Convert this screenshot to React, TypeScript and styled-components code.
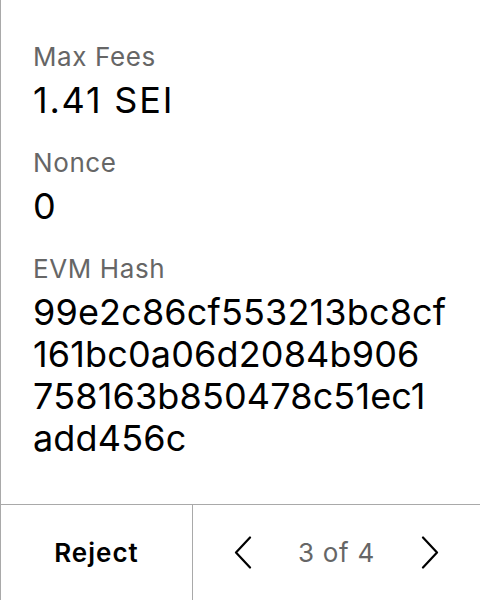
import React from "react";
import styled, { createGlobalStyle } from "styled-components";

const Global = createGlobalStyle`
  html, body { margin: 0; padding: 0; background: #fff; }
  body { font-family: Inter, "Noto Sans", sans-serif; -webkit-font-smoothing: antialiased; }
`;

const Frame = styled.div`
  width: 480px;
  height: 600px;
  box-sizing: border-box;
  border-left: 1px solid #a9a9a9;
  display: flex;
  flex-direction: column;
  background: #fff;
`;

const Content = styled.div`
  flex: 1;
  padding: 41px 32px 0 32px;
  display: flex;
  flex-direction: column;
  gap: 26px;
`;

const Field = styled.div`
  display: flex;
  flex-direction: column;
  gap: 6px;
`;

const Label = styled.div`
  font-size: 26px;
  line-height: 32px;
  letter-spacing: 0.6px;
  color: #666;
`;

const Value = styled.div<{ $tracking?: number }>`
  font-size: 36px;
  line-height: 42px;
  color: #000;
  letter-spacing: ${(p) => p.$tracking ?? 0.15}px;
`;

const HashLine = styled.span`
  display: block;
`;

const Footer = styled.div`
  height: 96px;
  box-sizing: border-box;
  border-top: 1px solid #a9a9a9;
  display: grid;
  grid-template-columns: 192px 1fr;
  flex-shrink: 0;
`;

const RejectButton = styled.button`
  box-sizing: border-box;
  border: none;
  border-right: 1px solid #a9a9a9;
  background: transparent;
  font-family: inherit;
  font-size: 26px;
  font-weight: 600;
  letter-spacing: 1px;
  color: #000;
  padding: 0;
`;

const Pager = styled.div`
  display: flex;
  align-items: center;
  justify-content: space-between;
  padding: 0 41px;
`;

const Arrow = styled.button`
  border: none;
  background: transparent;
  padding: 0;
  display: flex;
`;

const PageText = styled.span`
  font-size: 26px;
  letter-spacing: 0.7px;
  color: #666;
`;

const Chevron = ({ dir }: { dir: "left" | "right" }) => (
  <svg width="18" height="34" viewBox="0 0 18 34" fill="none">
    <path
      d={dir === "left" ? "M16 1.5 L2 16.5 L16 31.5" : "M2 1.5 L16 16.5 L2 31.5"}
      stroke="#000"
      strokeWidth="2.2"
      strokeLinecap="round"
      strokeLinejoin="round"
    />
  </svg>
);

const hashLines = [
  "99e2c86cf553213bc8cf",
  "161bc0a06d2084b906",
  "758163b850478c51ec1",
  "add456c",
];

export default function App() {
  return (
    <>
      <Global />
      <Frame>
        <Content>
          <Field>
            <Label>Max Fees</Label>
            <Value $tracking={1.8}>1.41 SEI</Value>
          </Field>
          <Field>
            <Label>Nonce</Label>
            <Value>0</Value>
          </Field>
          <Field>
            <Label>EVM Hash</Label>
            <Value>
              {hashLines.map((line) => (
                <HashLine key={line}>{line}</HashLine>
              ))}
            </Value>
          </Field>
        </Content>
        <Footer>
          <RejectButton>Reject</RejectButton>
          <Pager>
            <Arrow><Chevron dir="left" /></Arrow>
            <PageText>3 of 4</PageText>
            <Arrow><Chevron dir="right" /></Arrow>
          </Pager>
        </Footer>
      </Frame>
    </>
  );
}
